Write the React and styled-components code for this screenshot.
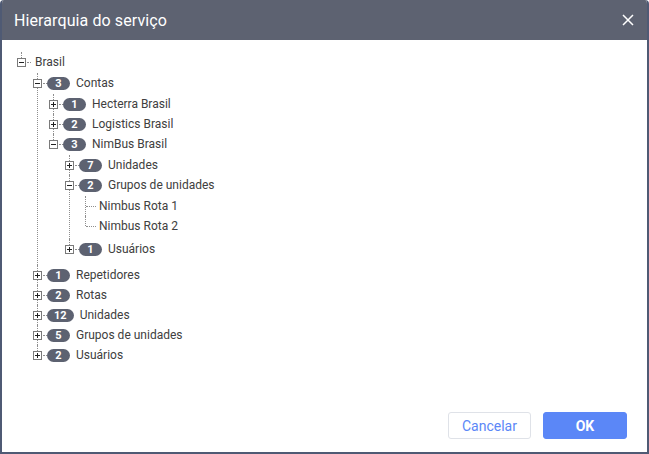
import React from 'react'
import styled, { createGlobalStyle } from 'styled-components'

const GlobalStyle = createGlobalStyle`
  html, body {
    margin: 0;
    padding: 0;
    background: #ffffff;
  }
  * {
    box-sizing: border-box;
  }
`

const Dialog = styled.div`
  width: 649px;
  height: 454px;
  display: flex;
  flex-direction: column;
  border: 2px solid #4f5a74;
  border-top: none;
  border-radius: 4px 4px 0 0;
  background: #ffffff;
  font-family: Roboto, 'Liberation Sans', sans-serif;
  overflow: hidden;
`

const Header = styled.div`
  height: 40px;
  flex: none;
  display: flex;
  align-items: center;
  justify-content: space-between;
  background: #5d6271;
  padding: 0 11px 0 12px;
`

const Title = styled.h1`
  margin: 0;
  font-size: 16px;
  font-weight: 400;
  color: #ffffff;
  letter-spacing: 0.1px;
`

const CloseButton = styled.button`
  width: 16px;
  height: 16px;
  padding: 0;
  border: 0;
  background: transparent;
  display: flex;
  align-items: center;
  justify-content: center;
  cursor: pointer;
`

const Body = styled.div`
  flex: 1;
  padding: 11px 15px 0;
  overflow: hidden;
`

const Children = styled.ul`
  list-style: none;
  margin: 0;
  padding: 1px 0 3px ${p => (p.$root ? 0 : 16)}px;
`

const Item = styled.li`
  position: relative;
  &::before {
    content: '';
    position: absolute;
    left: 4px;
    top: 0;
    height: ${p => (p.$last ? '10px' : '100%')};
    border-left: 1px dotted #8e8e8e;
  }
`

const Row = styled.div`
  position: relative;
  height: 20px;
  display: flex;
  align-items: center;
  white-space: nowrap;
`

const Toggle = styled.span`
  position: relative;
  z-index: 1;
  width: 9px;
  height: 9px;
  flex: none;
  display: flex;
  background: #ffffff;
`

const Dash = styled.span`
  width: ${p => (p.$leaf ? 10 : 4)}px;
  margin-left: ${p => (p.$leaf ? 5 : 1)}px;
  border-top: 1px dotted #8e8e8e;
`

const Badge = styled.span`
  margin-left: 0;
  min-width: 23px;
  height: 13px;
  padding: 0 7px;
  border-radius: 7px;
  background: #5d6271;
  color: #ffffff;
  font-size: 11px;
  font-weight: 700;
  line-height: 13px;
  text-align: center;
`

const Label = styled.span`
  margin-left: ${p => p.$gap}px;
  font-size: 12px;
  color: #404040;
`

const Footer = styled.div`
  flex: none;
  display: flex;
  justify-content: flex-end;
  gap: 12px;
  padding: 0 20px 13px 0;
`

const Button = styled.button`
  width: ${p => (p.$primary ? 84 : 83)}px;
  height: 27px;
  border-radius: 3px;
  border: 1px solid ${p => (p.$primary ? '#5b87f7' : '#dfe2e8')};
  background: ${p => (p.$primary ? '#5b87f7' : '#ffffff')};
  color: ${p => (p.$primary ? '#ffffff' : '#5b87f7')};
  font-family: Roboto, 'Liberation Sans', sans-serif;
  font-size: 14px;
  font-weight: ${p => (p.$primary ? 700 : 400)};
  cursor: pointer;
`

const tree = [
  {
    label: 'Brasil',
    open: true,
    children: [
      {
        count: 3,
        label: 'Contas',
        open: true,
        children: [
          { count: 1, label: 'Hecterra Brasil' },
          { count: 2, label: 'Logistics Brasil' },
          {
            count: 3,
            label: 'NimBus Brasil',
            open: true,
            children: [
              { count: 7, label: 'Unidades' },
              {
                count: 2,
                label: 'Grupos de unidades',
                open: true,
                children: [
                  { label: 'Nimbus Rota 1', leaf: true },
                  { label: 'Nimbus Rota 2', leaf: true }
                ]
              },
              { count: 1, label: 'Usuários' }
            ]
          }
        ]
      },
      { count: 1, label: 'Repetidores' },
      { count: 2, label: 'Rotas' },
      { count: 12, label: 'Unidades' },
      { count: 5, label: 'Grupos de unidades' },
      { count: 2, label: 'Usuários' }
    ]
  }
]

function ToggleIcon({ open }) {
  return (
    <svg width="9" height="9" viewBox="0 0 9 9">
      <rect x="0.5" y="0.5" width="8" height="8" fill="#fff" stroke="#7a7a7a" />
      <line x1="2" y1="4.5" x2="7" y2="4.5" stroke="#222" />
      {!open && <line x1="4.5" y1="2" x2="4.5" y2="7" stroke="#222" />}
    </svg>
  )
}

function Node({ node, last }) {
  return (
    <Item $last={last}>
      <Row>
        {node.leaf ? (
          <>
            <Dash $leaf />
            <Label $gap={3}>{node.label}</Label>
          </>
        ) : (
          <>
            <Toggle>
              <ToggleIcon open={node.open} />
            </Toggle>
            <Dash />
            {node.count !== undefined && <Badge>{node.count}</Badge>}
            <Label $gap={node.count !== undefined ? 6 : 4}>{node.label}</Label>
          </>
        )}
      </Row>
      {node.open && node.children && <NodeList nodes={node.children} />}
    </Item>
  )
}

function NodeList({ nodes, root }) {
  return (
    <Children $root={root}>
      {nodes.map((n, i) => (
        <Node key={n.label + i} node={n} last={i === nodes.length - 1} />
      ))}
    </Children>
  )
}

export default function App() {
  return (
    <>
      <GlobalStyle />
      <Dialog>
        <Header>
          <Title>Hierarquia do serviço</Title>
          <CloseButton aria-label="Fechar">
            <svg width="12" height="12" viewBox="0 0 12 12">
              <path d="M1 1L11 11M11 1L1 11" stroke="#fff" strokeWidth="1.5" />
            </svg>
          </CloseButton>
        </Header>
        <Body>
          <NodeList nodes={tree} root />
        </Body>
        <Footer>
          <Button>Cancelar</Button>
          <Button $primary>OK</Button>
        </Footer>
      </Dialog>
    </>
  )
}
